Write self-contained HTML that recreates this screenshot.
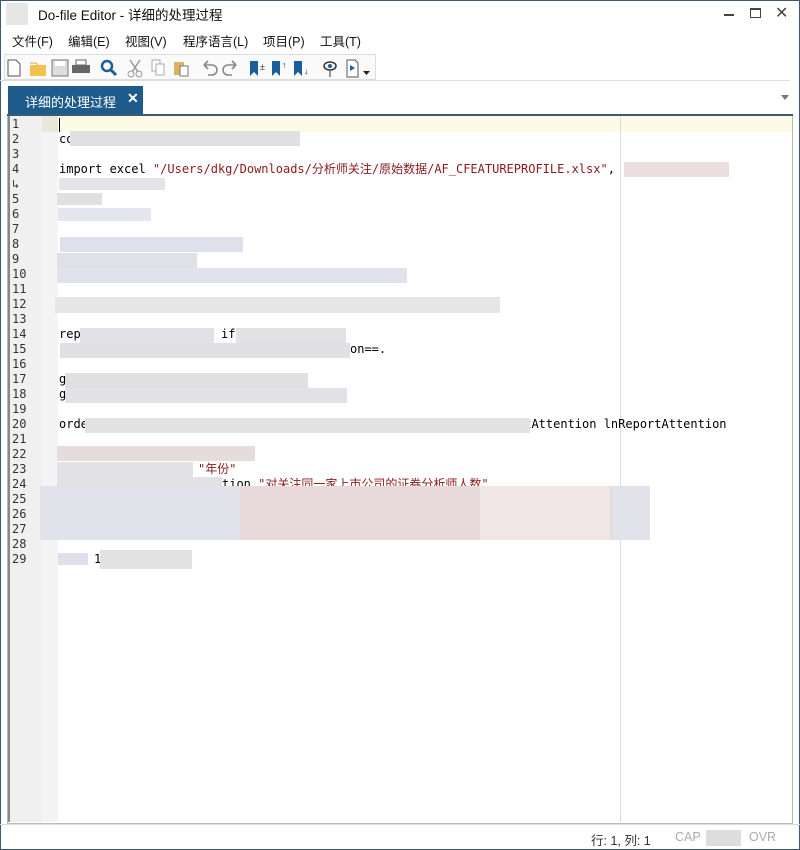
<!DOCTYPE html>
<html><head><meta charset="utf-8"><style>
*{margin:0;padding:0;box-sizing:border-box}
body{width:800px;height:850px;background:#fff;font-family:"Liberation Sans","Noto Sans CJK SC",sans-serif;position:relative;overflow:hidden}
.a{position:absolute}
.menu span{position:absolute;top:31px;font-size:12.5px;color:#111}
.code{font-family:"DejaVu Sans Mono","Noto Sans CJK SC",monospace;font-size:12px;position:absolute;white-space:pre;line-height:15px}
.ln{position:absolute;left:12px;font-family:"DejaVu Sans Mono",monospace;font-size:12px;color:#333;line-height:15px}
.b{position:absolute;height:15px}
</style></head><body>
<div class="a" style="left:0;top:0;width:800px;height:850px;border:1px solid #3c5a73"></div>
<div class="a" style="left:6px;top:3px;width:22px;height:22px;background:#e6e6e6"></div>
<div class="a" style="left:38px;top:4px;font-size:13.5px;color:#111">Do-file Editor - 详细的处理过程</div>
<div class="a" style="left:724px;top:14px;width:10px;height:2px;background:#444"></div>
<div class="a" style="left:750px;top:8px;width:11px;height:10px;border:1px solid #444;border-top-width:2px"></div>
<div class="a" style="left:775px;top:3px;font-size:16px;color:#444">✕</div>
<div class="menu"><span style="left:12px">文件(F)</span><span style="left:68px">编辑(E)</span><span style="left:125px">视图(V)</span><span style="left:183px">程序语言(L)</span><span style="left:263px">项目(P)</span><span style="left:320px">工具(T)</span></div>
<div class="a" style="left:4px;top:54px;width:372px;height:26px;border:1px solid #ddd;background:#fafafa"></div>
<svg class="a" style="left:4px;top:56px" width="372" height="24">
<path d="M4 4h8l4 4v12H4z" fill="#fff" stroke="#555"/>
<path d="M26 9h16v11H26z" fill="#f2c24e"/><path d="M26 7h6l2 2" fill="none" stroke="#e0a830"/>
<rect x="48" y="4" width="16" height="16" fill="#ddd" stroke="#777"/><rect x="51" y="5" width="10" height="5" fill="#fff"/>
<rect x="68" y="9" width="18" height="8" fill="#666"/><rect x="72" y="4" width="10" height="5" fill="#fff" stroke="#666"/>
<circle cx="103" cy="10" r="5" fill="none" stroke="#1b5e9c" stroke-width="2.5"/><path d="M107 14l5 5" stroke="#1b5e9c" stroke-width="3"/>
<path d="M126 4l8 12M136 4l-8 12" stroke="#999" stroke-width="1.5"/><circle cx="127" cy="18" r="3" fill="none" stroke="#999"/><circle cx="135" cy="18" r="3" fill="none" stroke="#999"/>
<rect x="148" y="4" width="8" height="11" fill="#fff" stroke="#aaa"/><rect x="152" y="8" width="8" height="11" fill="#fff" stroke="#aaa"/>
<rect x="170" y="6" width="10" height="13" fill="#e0b060"/><rect x="176" y="10" width="8" height="10" fill="#fff" stroke="#777"/>
<path d="M200 9h8a5 5 0 010 10h-4M200 9l4-4M200 9l4 4" fill="none" stroke="#888" stroke-width="1.6"/>
<path d="M232 9h-8a5 5 0 000 10h4M232 9l-4-4M232 9l-4 4" fill="none" stroke="#888" stroke-width="1.6"/>
<path d="M246 5h8v15l-4-4-4 4z" fill="#1b5e9c"/><text x="256" y="14" font-size="9" fill="#333">±</text>
<path d="M268 5h8v15l-4-4-4 4z" fill="#1b5e9c"/><text x="278" y="12" font-size="9" fill="#333">↑</text>
<path d="M290 5h8v15l-4-4-4 4z" fill="#1b5e9c"/><text x="300" y="18" font-size="9" fill="#333">↓</text>
<ellipse cx="326" cy="10" rx="6" ry="4" fill="none" stroke="#333" stroke-width="1.5"/><circle cx="326" cy="10" r="2" fill="#1b5e9c"/><path d="M326 15v6" stroke="#333"/>
<path d="M343 4h8l3 3v14h-11z" fill="#fff" stroke="#555"/><path d="M346 9l5 3-5 3z" fill="#1b5e9c"/><path d="M359 15h7l-3.5 4z" fill="#222"/>
</svg>
<div class="a" style="left:0;top:80px;width:790px;height:1px;background:#ddd"></div>
<div class="a" style="left:8px;top:86px;width:135px;height:28px;background:#1e5a8a;color:#fff;font-size:13px;padding:6px 0 0 17px">详细的处理过程<span style="position:absolute;left:119px;top:4px;font-weight:bold;font-size:14px">✕</span></div>
<div class="a" style="left:781px;top:95px;width:0;height:0;border:4px solid transparent;border-top:5px solid #777"></div>
<div class="a" style="left:7px;top:114px;width:786px;height:2px;background:#3c5a73"></div>
<div class="a" style="left:7px;top:116px;width:786px;height:708px;border:1px solid #bbb;border-top:0;background:#fff"></div>
<div class="a" style="left:8px;top:116px;width:34px;height:706px;background:#f0f0f0;border-left:2px solid #888"></div>
<div class="a" style="left:42px;top:116px;width:16px;height:706px;background:#f4f4f4"></div>
<div class="a" style="left:58px;top:116px;width:734px;height:16px;background:#fdfbe6"></div>
<div class="a" style="left:42px;top:116px;width:16px;height:16px;background:#eae8da"></div>
<div class="a" style="left:620px;top:116px;width:1px;height:706px;background:#ddd"></div>
<div class="a" style="left:59px;top:118px;width:1px;height:14px;background:#000"></div>
<div class="ln" style="top:117px">1<br>2<br>3<br>4<br>↳<br>5<br>6<br>7<br>8<br>9<br>10<br>11<br>12<br>13<br>14<br>15<br>16<br>17<br>18<br>19<br>20<br>21<br>22<br>23<br>24<br>25<br>26<br>27<br>28<br>29</div>
<div class="code" style="left:59px;top:132px">co</div>
<div class="code" style="left:59px;top:162px;color:#000">import excel <span style="color:#8b1a1a">"/Users/dkg/Downloads/分析师关注/原始数据/AF_CFEATUREPROFILE.xlsx"</span>,</div>
<div class="code" style="left:59px;top:327px">rep</div>
<div class="code" style="left:221px;top:327px">if</div>
<div class="code" style="left:350px;top:342px">on==.</div>
<div class="code" style="left:59px;top:372px">g<br>g</div>
<div class="code" style="left:59px;top:417px">orde</div>
<div class="code" style="left:517px;top:417px">rtAttention lnReportAttention</div>
<div class="code" style="left:198px;top:462px;color:#8b1a1a">"年份"</div>
<div class="code" style="left:222px;top:477px">tion <span style="color:#8b1a1a">"对关注同一家上市公司的证券分析师人数"</span></div>
<div class="code" style="left:94px;top:552px">1</div>
<div class="b" style="left:70px;top:131px;width:230px;background:#e0e0e0"></div>
<div class="b" style="left:624px;top:162px;width:105px;background:#ecdede"></div>
<div class="b" style="left:59px;top:178px;width:106px;height:12px;background:#e4e4ea"></div>
<div class="b" style="left:57px;top:193px;width:45px;height:12px;background:#e0e0e0"></div>
<div class="b" style="left:58px;top:208px;width:93px;height:13px;background:#e6e6ee"></div>
<div class="b" style="left:60px;top:237px;width:183px;background:#e0e0ec"></div>
<div class="b" style="left:57px;top:253px;width:140px;background:#e0e0e8"></div>
<div class="b" style="left:57px;top:268px;width:350px;background:#e2e2ea"></div>
<div class="b" style="left:55px;top:297px;width:445px;height:16px;background:#e6e6e6"></div>
<div class="b" style="left:80px;top:328px;width:134px;background:#e0e0e6"></div>
<div class="b" style="left:236px;top:328px;width:110px;background:#e2e2e2"></div>
<div class="b" style="left:60px;top:343px;width:290px;background:#e0e0e4"></div>
<div class="b" style="left:65px;top:373px;width:243px;background:#e0e0e0"></div>
<div class="b" style="left:65px;top:388px;width:282px;background:#e2e2e6"></div>
<div class="b" style="left:85px;top:418px;width:445px;background:#e2e2e2"></div>
<div class="b" style="left:57px;top:446px;width:198px;background:#e6dcdc"></div>
<div class="b" style="left:57px;top:462px;width:136px;background:#e2e2e6"></div>
<div class="b" style="left:57px;top:477px;width:165px;background:#e2e2e6"></div>
<div class="b" style="left:40px;top:486px;width:610px;height:54px;background:#e8dada"></div>
<div class="b" style="left:40px;top:486px;width:200px;height:54px;background:#e2e2ea"></div>
<div class="b" style="left:480px;top:486px;width:130px;height:54px;background:#f0e6e6"></div>
<div class="b" style="left:612px;top:486px;width:38px;height:54px;background:#e2e2ea"></div>
<div class="b" style="left:58px;top:553px;width:30px;height:12px;background:#e0e0ec"></div>
<div class="b" style="left:100px;top:550px;width:92px;height:19px;background:#e2e2e2"></div>
<div class="a" style="left:0;top:824px;width:800px;height:1px;background:#ddd"></div>
<div class="a" style="left:591px;top:830px;font-size:12.5px;color:#333">行: 1, 列: 1</div>
<div class="a" style="left:675px;top:830px;font-size:12.5px;color:#aaa">CAP</div>
<div class="a" style="left:706px;top:830px;width:35px;height:16px;background:#ddd"></div>
<div class="a" style="left:749px;top:830px;font-size:12.5px;color:#aaa">OVR</div>
</body></html>
